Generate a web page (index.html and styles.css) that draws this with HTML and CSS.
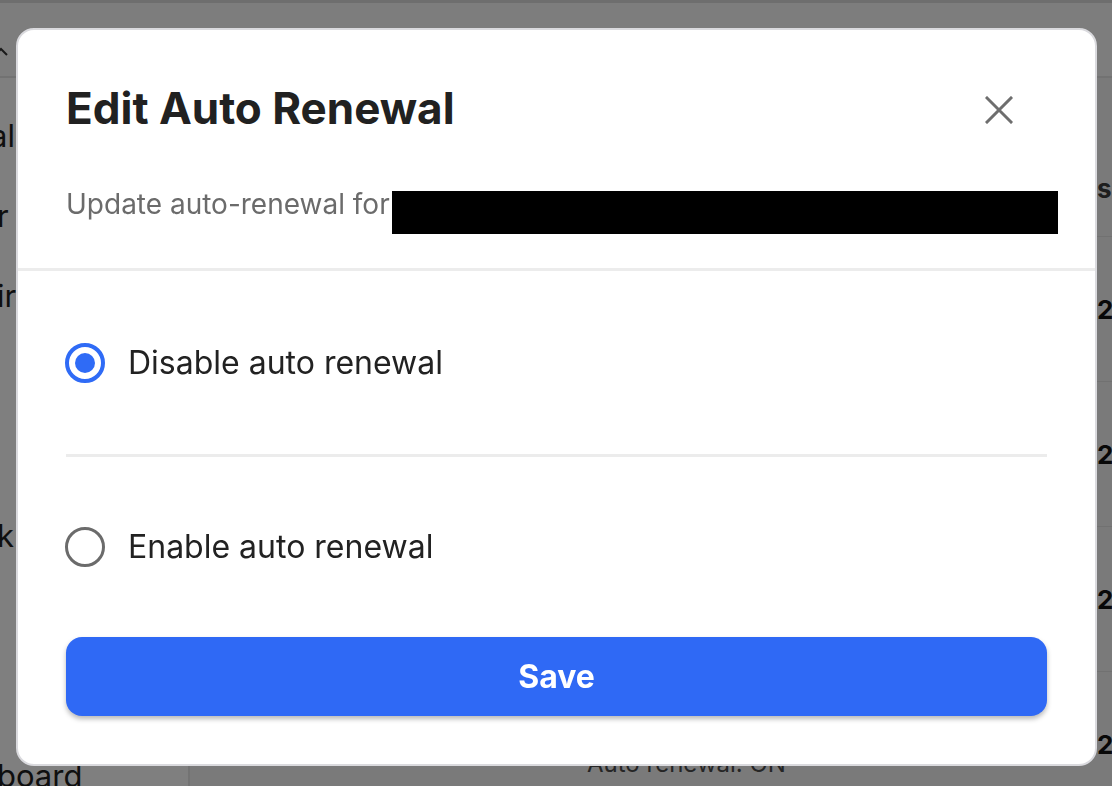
FILE: index.html
```html
<!DOCTYPE html>
<html lang="en">
<head>
<meta charset="utf-8">
<title>Edit Auto Renewal</title>
<link rel="stylesheet" href="styles.css">
</head>
<body>
<div class="page">
  <header class="topbar">
    <svg class="back" width="20" height="20" viewBox="0 0 20 20"><path d="M4 14 L10 8 L16 14" fill="none" stroke="#333" stroke-width="2"/></svg>
  </header>
  <div class="content">
    <nav class="sidebar">
      <div class="nav-item nav-item-shift">al</div>
      <div class="nav-item">r</div>
      <div class="nav-item">ir</div>
      <div class="nav-item"></div>
      <div class="nav-item"></div>
      <div class="nav-item">k</div>
      <div class="nav-item"></div>
      <div class="nav-item"></div>
      <div class="nav-item">board</div>
    </nav>
    <main class="main">
      <div class="thead"><span></span><span class="th">s</span></div>
      <div class="trow"><span></span><span class="td">2</span></div>
      <div class="trow"><span></span><span class="td">2</span></div>
      <div class="trow"><span></span><span class="td">2</span></div>
      <div class="trow"><span class="status">Auto renewal: ON</span><span class="td">2</span></div>
    </main>
  </div>
</div>

<div class="overlay">
  <div class="modal" role="dialog" aria-labelledby="modal-title">
    <div class="modal-header">
      <h1 class="modal-title" id="modal-title">Edit Auto Renewal</h1>
      <button class="close" aria-label="Close">
        <svg width="28" height="28" viewBox="0 0 28 28"><path d="M2 2 L26 26 M26 2 L2 26" stroke="#6e6e6e" stroke-width="3" stroke-linecap="square" fill="none"/></svg>
      </button>
    </div>
    <div class="subtitle"><span>Update auto-renewal for</span><span class="redact"></span></div>
    <div class="separator"></div>
    <label class="option option-first">
      <span class="radio checked"><span class="dot"></span></span>
      <span class="option-label">Disable auto renewal</span>
    </label>
    <div class="divider"></div>
    <label class="option option-second">
      <span class="radio"></span>
      <span class="option-label">Enable auto renewal</span>
    </label>
    <button class="save">Save</button>
  </div>
</div>
</body>
</html>
```
FILE: styles.css
```css
* { box-sizing: border-box; }

body {
  margin: 0;
  width: 1112px;
  height: 786px;
  overflow: hidden;
  font-family: Inter, "Noto Sans", sans-serif;
  background: #f4f4f4;
}

/* background page */
.page {
  display: flex;
  flex-direction: column;
  height: 786px;
}

.topbar {
  height: 78px;
  flex: none;
  border-top: 3px solid #dcdcdc;
  border-bottom: 2px solid #e4e4e4;
  background: #fafafa;
  display: flex;
  align-items: flex-start;
}

.back {
  margin-top: 38px;
  margin-left: -9px;
}

.content {
  display: flex;
  flex: 1;
}

.sidebar {
  width: 193px;
  flex: none;
  background: #ffffff;
  border-right: 2px solid #e6e6e6;
  padding-top: 17px;
  margin-left: -3px;
}

.nav-item {
  height: 80px;
  display: flex;
  align-items: center;
  font-size: 31px;
  color: #1e1e1e;
}

.nav-item-shift {
  margin-left: -7px;
}

.main {
  flex: 1;
  padding-top: 62px;
  overflow: hidden;
}

.thead,
.trow {
  display: grid;
  grid-template-columns: 907px 100px;
  align-items: center;
  border-bottom: 1px solid #e2e2e2;
}

.thead { height: 97px; }
.trow { height: 145px; }

.th {
  font-size: 26px;
  font-weight: 700;
  color: #3c3c3c;
}

.td {
  font-size: 26px;
  font-weight: 700;
  color: #111;
}

.status {
  align-self: start;
  padding-top: 80px;
  padding-left: 397px;
  font-size: 24px;
  line-height: 24px;
  color: #4a4a4a;
}

/* overlay + modal */
.overlay {
  position: fixed;
  inset: 0;
  background: rgba(0, 0, 0, 0.5);
  display: flex;
  align-items: flex-start;
  padding: 28px 0 0 16px;
}

.modal {
  width: 1081px;
  height: 738px;
  border: 2px solid #dadade;
  border-radius: 18px;
  background: #ffffff;
  display: flex;
  flex-direction: column;
}

.modal-header {
  display: flex;
  justify-content: space-between;
  align-items: flex-start;
  padding: 56px 82px 0 48px;
}

.modal-title {
  margin: 0;
  font-size: 44px;
  line-height: 44px;
  font-weight: 700;
  color: #212121;
}

.close {
  margin-top: 10px;
  width: 28px;
  height: 28px;
  padding: 0;
  border: 0;
  background: none;
  display: flex;
}

.subtitle {
  display: flex;
  align-items: flex-start;
  margin-top: 60px;
  padding-left: 48px;
  font-size: 28px;
  line-height: 28px;
  color: #6b6b6b;
}

.redact {
  width: 666px;
  height: 43px;
  margin-top: 1px;
  margin-left: 2px;
  background: #000;
  flex: none;
}

.separator {
  margin-top: 34px;
  height: 3px;
  background: #ececec;
  flex: none;
}

.option {
  display: flex;
  align-items: center;
  gap: 23px;
  padding: 0 48px 0 47px;
  flex: none;
}

.option-first { height: 183px; }
.option-second { height: 180px; }

.divider {
  margin: 0 48px;
  height: 3px;
  background: #ececec;
  flex: none;
}

.radio {
  width: 40px;
  height: 40px;
  border-radius: 50%;
  border: 3px solid #6b6b6b;
  display: flex;
  align-items: center;
  justify-content: center;
  flex: none;
}

.radio.checked {
  border: 4px solid #2f6bf6;
}

.dot {
  width: 20px;
  height: 20px;
  border-radius: 50%;
  background: #2f6bf6;
}

.option-label {
  font-size: 32px;
  line-height: 32px;
  color: #222222;
}

.save {
  margin: 0 48px;
  height: 79px;
  flex: none;
  border: 0;
  border-radius: 16px;
  background: #2f69f5;
  color: #ffffff;
  font-family: Inter, "Noto Sans", sans-serif;
  font-size: 32px;
  font-weight: 700;
  box-shadow: 0 3px 5px rgba(0, 0, 0, 0.28);
}
```
